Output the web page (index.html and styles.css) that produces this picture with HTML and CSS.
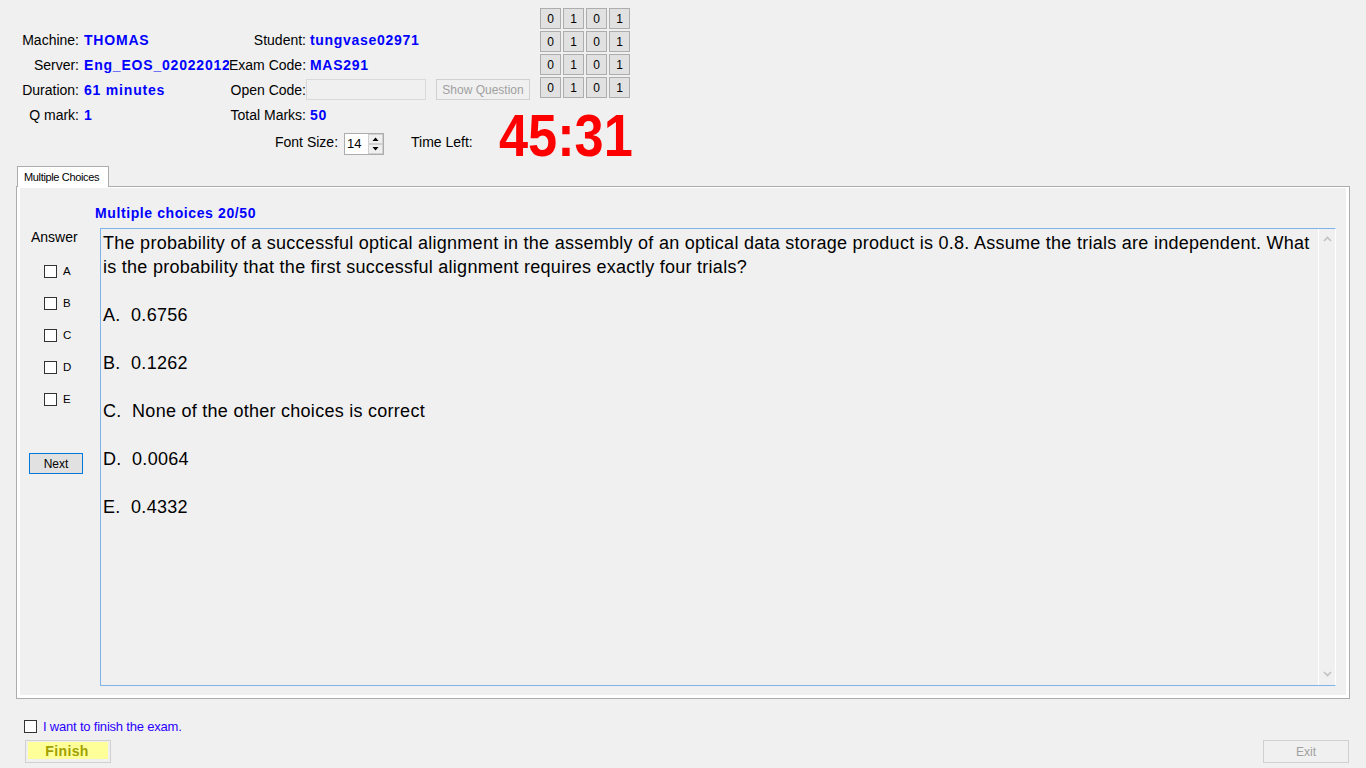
FILE: index.html
```html
<!DOCTYPE html>
<html>
<head>
<meta charset="utf-8">
<title>Exam</title>
<link rel="stylesheet" href="styles.css">
</head>
<body>
<div class="page">
  <div class="header">
    <div class="info">
      <div class="info-row">
        <span class="lbl1">Machine:</span><span class="val1">THOMAS</span>
        <span class="lbl2">Student:</span><span class="val2">tungvase02971</span>
      </div>
      <div class="info-row">
        <span class="lbl1">Server:</span><span class="val1">Eng_EOS_02022012</span>
        <span class="lbl2">Exam Code:</span><span class="val2">MAS291</span>
      </div>
      <div class="info-row">
        <span class="lbl1">Duration:</span><span class="val1">61 minutes</span>
        <span class="lbl2">Open Code:</span><span class="open-input"></span><span class="btn btn-disabled show-q">Show Question</span>
      </div>
      <div class="info-row">
        <span class="lbl1">Q mark:</span><span class="val1">1</span>
        <span class="lbl2">Total Marks:</span><span class="val2">50</span>
      </div>
    </div>
    <div class="bits">
      <span class="bit">0</span><span class="bit">1</span><span class="bit">0</span><span class="bit">1</span>
      <span class="bit">0</span><span class="bit">1</span><span class="bit">0</span><span class="bit">1</span>
      <span class="bit">0</span><span class="bit">1</span><span class="bit">0</span><span class="bit">1</span>
      <span class="bit">0</span><span class="bit">1</span><span class="bit">0</span><span class="bit">1</span>
    </div>
    <div class="timer-row">
      <span class="fs-label">Font Size:</span>
      <span class="spinner"><span class="spin-val">14</span><span class="spin-btns"><svg width="15" height="20" viewBox="0 0 15 20"><rect x="0.5" y="0.5" width="14" height="9" fill="#f0f0f0" stroke="#d0d0d0"/><rect x="0.5" y="10.5" width="14" height="9" fill="#f0f0f0" stroke="#d0d0d0"/><path d="M4.5 7 L7.5 3.5 L10.5 7 Z" fill="#000"/><path d="M4.5 13 L7.5 16.5 L10.5 13 Z" fill="#000"/></svg></span></span>
      <span class="tl-label">Time Left:</span>
      <span class="timer">45:31</span>
    </div>
  </div>

  <div class="tabs">
    <div class="tab-head"><span class="tab">Multiple Choices</span></div>
    <div class="panel">
      <div class="panel-inner">
        <div class="mc-title">Multiple choices 20/50</div>
        <div class="mc-body">
          <div class="answer-col">
            <div class="answer-lbl">Answer</div>
            <div class="opts">
              <label class="opt"><span class="cb"></span><span>A</span></label>
              <label class="opt"><span class="cb"></span><span>B</span></label>
              <label class="opt"><span class="cb"></span><span>C</span></label>
              <label class="opt"><span class="cb"></span><span>D</span></label>
              <label class="opt"><span class="cb"></span><span>E</span></label>
            </div>
            <span class="btn next-btn">Next</span>
          </div>
          <div class="qbox">
            <div class="qtext">
              <p>The probability of a successful optical alignment in the assembly of an optical data storage product is 0.8. Assume the trials are independent. What is the probability that the first successful alignment requires exactly four trials?</p>
              <p class="choice">A.  0.6756</p>
              <p class="choice">B.  0.1262</p>
              <p class="choice">C.  None of the other choices is correct</p>
              <p class="choice">D.  0.0064</p>
              <p class="choice">E.  0.4332</p>
            </div>
            <div class="vscroll">
              <svg class="arr" width="9" height="6" viewBox="0 0 9 6"><path d="M1 5 L4.5 1.5 L8 5" fill="none" stroke="#c2c2c2" stroke-width="1.6"/></svg>
              <svg class="arr" width="9" height="6" viewBox="0 0 9 6"><path d="M1 1 L4.5 4.5 L8 1" fill="none" stroke="#c2c2c2" stroke-width="1.6"/></svg>
            </div>
          </div>
        </div>
      </div>
    </div>
  </div>

  <div class="footer">
    <label class="finish-check"><span class="cb"></span><span class="finish-text">I want to finish the exam.</span></label>
    <div class="footer-btns">
      <span class="finish-btn"><span class="finish-inner">Finish</span></span>
      <span class="btn btn-disabled exit-btn">Exit</span>
    </div>
  </div>
</div>
</body>
</html>
```

FILE: styles.css
```css
* { box-sizing: border-box; }
html, body { margin: 0; padding: 0; }
body {
  background: #f0f0f0;
  font-family: "Liberation Sans", Arial, sans-serif;
  font-size: 14px;
  color: #000;
  width: 1366px;
  height: 768px;
  overflow: hidden;
}
.page { width: 1366px; height: 768px; }

/* Header */
.header {
  display: grid;
  grid-template-columns: 540px auto;
  grid-template-rows: 128px 38px;
}
.info { padding-top: 27px; grid-column: 1; grid-row: 1; }
.info-row { display: flex; align-items: center; height: 25px; white-space: nowrap; }
.lbl1 { width: 79px; text-align: right; }
.val1 {
  width: 145px; margin-left: 5px; overflow: hidden;
  color: #0000ff; font-weight: bold; letter-spacing: 0.8px;
}
.lbl2 { width: 77px; text-align: right; }
.val2 { margin-left: 4px; color: #0000ff; font-weight: bold; letter-spacing: 0.7px; }
.open-input {
  display: block; width: 120px; height: 21px; margin-left: 0;
  border: 1px solid #d9d9d9; background: #f0f0f0;
}
.btn {
  display: inline-flex; align-items: center; justify-content: center;
  border: 1px solid #adadad; background: #e1e1e1;
  font-size: 12px; color: #000; height: 21px;
}
.btn-disabled { border-color: #d0d0d0; background: #f0f0f0; color: #a0a0a0; }
.show-q { width: 94px; margin-left: 10px; }

.bits {
  grid-column: 2; grid-row: 1;
  padding-top: 8px;
  display: grid;
  grid-template-columns: repeat(4, 21px);
  grid-auto-rows: 21px;
  gap: 2px;
  align-content: start;
}
.bit {
  display: flex; align-items: center; justify-content: center;
  border: 1px solid #adadad; background: #e1e1e1; font-size: 12px;
}

.timer-row {
  grid-column: 1 / span 2; grid-row: 2;
  display: flex; align-items: flex-start; white-space: nowrap;
}
.fs-label { margin-left: 275px; margin-top: 6px; line-height: 16px; }
.spinner {
  margin-left: 6px; margin-top: 5px;
  width: 40px; height: 22px;
  border: 1px solid #acacac; background: #fff;
  display: flex; justify-content: space-between; align-items: center;
}
.spin-val { font-size: 13px; padding-left: 2px; margin-top: -2px; }
.spin-btns { display: flex; height: 20px; margin-right: 0; }
.spin-btns svg { display: block; }
.tl-label { margin-left: 27px; margin-top: 6px; line-height: 16px; }
.timer {
  display: inline-block;
  margin-left: 26px; margin-top: -22px;
  font-size: 60px; line-height: 60px; font-weight: bold;
  color: #ff0000;
  transform: scaleX(0.872); transform-origin: left top;
}

/* Tabs */
.tabs { margin-left: 16px; width: 1334px; }
.tab-head { display: flex; padding-left: 1px; height: 20px; }
.tab {
  position: relative; z-index: 1;
  display: flex; align-items: center; padding-left: 6px;
  width: 92px; height: 21px;
  border: 1px solid #acacac; border-bottom: none;
  background: #ffffff;
  font-size: 11px; letter-spacing: -0.35px;
}
.panel {
  height: 513px;
  border: 1px solid #acacac;
  background: #ffffff;
  padding: 1px 3px 3px 3px;
}
.panel-inner { background: #f0f0f0; height: 100%; padding-top: 17px; }
.mc-title {
  padding-left: 75px; line-height: 16px; height: 16px;
  color: #0000ff; font-weight: bold; font-size: 14px; letter-spacing: 0.6px;
}
.mc-body { display: flex; margin-top: 7px; }
.answer-col { width: 80px; display: flex; flex-direction: column; align-items: flex-start; }
.answer-lbl { margin-top: 1px; margin-left: 11px; line-height: 16px; }
.opts { margin-top: 10px; }
.opt { display: flex; align-items: center; height: 32px; padding-left: 24px; font-size: 11.5px; }
.cb {
  display: inline-block; width: 13px; height: 13px;
  border: 1px solid #333333; background: #ffffff;
}
.opt .cb { margin-right: 6px; }
.next-btn { margin-top: 38px; margin-left: 9px; width: 54px; border-color: #0078d7; }

.qbox {
  width: 1236px; height: 458px;
  border: 1px solid #7eb4ea; border-right: 1px solid #ffffff;
  display: flex;
}
.qtext { flex: 1; padding: 2px 1px 0 2px; font-size: 18px; line-height: 24px; letter-spacing: 0.27px; }
.qtext p { margin: 0 0 24px 0; }
.qtext .choice { white-space: pre; }
.vscroll {
  width: 17px; border-left: 1px solid #ffffff;
  display: flex; flex-direction: column; justify-content: space-between; align-items: center;
  padding: 7px 0 8px 0;
}
.arr { display: block; }

/* Footer */
.footer { padding-left: 24px; padding-top: 21px; }
.finish-check { display: flex; align-items: center; height: 13px; }
.finish-check .cb { margin-right: 6px; }
.finish-text { color: #2a00ff; font-size: 13px; letter-spacing: -0.2px; }
.footer-btns {
  display: flex; justify-content: space-between; align-items: flex-start;
  margin-top: 7px; padding-left: 1px; padding-right: 17px;
}
.finish-btn {
  display: block; width: 86px; height: 23px;
  border: 1px solid #d0d0d0; padding: 1px 2px 3px 2px;
}
.finish-inner {
  display: flex; align-items: center; justify-content: center;
  height: 100%; background: #ffff99;
  color: #a0a000; font-weight: bold; font-size: 14px; letter-spacing: 0.4px;
  padding-right: 2px;
}
.exit-btn { width: 86px; height: 23px; }
```
